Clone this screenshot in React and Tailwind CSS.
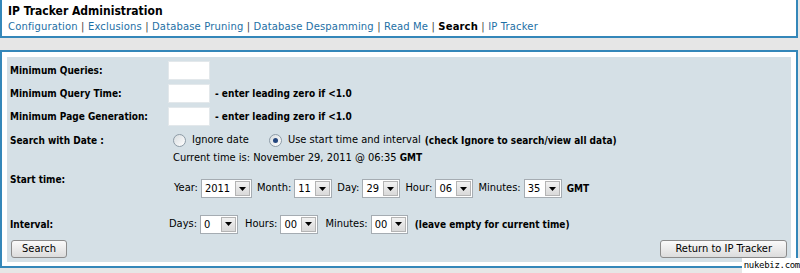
import { Fragment } from 'react'

const links = ['Configuration', 'Exclusions', 'Database Pruning', 'Database Despamming', 'Read Me', 'Search', 'IP Tracker']

function TextBox() {
  return <span className="inline-block h-[19px] w-[42px] border border-[#e3e8eb] bg-white" />
}

function Sel({ value, w }) {
  return (
    <span className={`inline-flex h-[19px] items-center border border-[#a5acb2] bg-white ${w}`}>
      <span className="flex-1 pl-[3px] text-[11px] leading-[17px]">{value}</span>
      <span className="mr-[1px] flex h-[15px] w-[15px] items-center justify-center border border-[#b4b4b4] bg-gradient-to-b from-[#f2f2f2] to-[#d9d9d9]">
        <svg width="7" height="4" viewBox="0 0 7 4"><path d="M0 0h7L3.5 4z" fill="#000" /></svg>
      </span>
    </span>
  )
}

function Radio({ checked }) {
  return (
    <span className="inline-flex h-[13px] w-[13px] items-center justify-center rounded-full border border-[#8d9ba6] bg-gradient-to-br from-[#d8dde0] to-white">
      {checked && <span className="h-[5px] w-[5px] rounded-full bg-[#24467e]" />}
    </span>
  )
}

function Btn({ children, px }) {
  return (
    <button className={`h-[18px] rounded-[3px] border border-[#8c8c8c] bg-gradient-to-b from-[#fafafa] to-[#dcdcdc] text-[11px] leading-[16px] text-black ${px}`}>
      {children}
    </button>
  )
}

export default function App() {
  return (
    <div className="relative h-[273px] w-[800px] overflow-hidden bg-[#e6e6e6] font-['DejaVu_Sans_Condensed','DejaVu_Sans',sans-serif] text-[11px] text-black font-stretch-condensed">
      {/* header panel */}
      <div className="mt-[-2px] h-[40px] w-[798px] border-2 border-[#3487b9] bg-white pl-[6px] pt-[4px]">
        <div className="text-[12px] font-bold leading-[14px]">IP Tracker Administration</div>
        <div className="mt-[3px] font-['DejaVu_Sans',sans-serif] text-[10px] leading-[12px] tracking-[0.15px] font-stretch-normal">
          {links.map((l, i) => (
            <Fragment key={l}>
              {i > 0 && <span className="text-[#444]"> | </span>}
              {l === 'Search'
                ? <span className="font-bold">{l}</span>
                : <span className="text-[#1d6fa5]">{l}</span>}
            </Fragment>
          ))}
        </div>
      </div>

      {/* search panel */}
      <div className="mt-[12px] w-[798px] border-2 border-[#3487b9] bg-white px-[5px] pt-[5px] pb-[4px]">
        <div className="h-[205px] bg-[#d5e0e6] pt-[2px] pl-[3px] pr-[4px]">
          <div className="flex h-[23px] items-center">
            <div className="w-[158px] text-[10px] font-bold">Minimum Queries:</div>
            <TextBox />
          </div>
          <div className="flex h-[23px] items-center">
            <div className="w-[158px] text-[10px] font-bold">Minimum Query Time:</div>
            <TextBox />
            <span className="ml-[5px] text-[10px] font-bold">- enter leading zero if &lt;1.0</span>
          </div>
          <div className="flex h-[23px] items-center">
            <div className="w-[158px] text-[10px] font-bold">Minimum Page Generation:</div>
            <TextBox />
            <span className="ml-[5px] text-[10px] font-bold">- enter leading zero if &lt;1.0</span>
          </div>
          <div className="flex h-[24px] items-center">
            <div className="w-[158px] text-[10px] font-bold">Search with Date :</div>
            <div className="flex items-center pl-[5px]">
              <Radio />
              <span className="ml-[6px]">Ignore date</span>
              <span className="ml-[20px]"><Radio checked /></span>
              <span className="ml-[6px]">Use start time and interval</span>
              <span className="ml-[4px] text-[10px] font-bold">(check Ignore to search/view all data)</span>
            </div>
          </div>
          <div className="flex h-[13px] items-center">
            <div className="w-[158px]" />
            <div className="pl-[5px]">Current time is: November 29, 2011 @ 06:35 <b className="text-[10px]">GMT</b></div>
          </div>
          <div className="flex h-[44px] items-start">
            <div className="mt-[9px] w-[158px] text-[10px] font-bold leading-[12px]">Start time:</div>
            <div className="mt-[14px] flex items-center gap-[3px] pl-[6px]">
              <span>Year:</span>
              <Sel value="2011" w="w-[51px]" />
              <span className="ml-[2px]">Month:</span>
              <Sel value="11" w="w-[38px]" />
              <span className="ml-[2px]">Day:</span>
              <Sel value="29" w="w-[38px]" />
              <span className="ml-[2px]">Hour:</span>
              <Sel value="06" w="w-[38px]" />
              <span className="ml-[2px]">Minutes:</span>
              <Sel value="35" w="w-[38px]" />
              <span className="ml-[2px] text-[10px] font-bold">GMT</span>
            </div>
          </div>
          <div className="flex h-[30px] items-center">
            <div className="w-[158px] text-[10px] font-bold">Interval:</div>
            <div className="flex items-center gap-[3px] pl-[1px]">
              <span>Days:</span>
              <Sel value="0" w="w-[38px]" />
              <span className="ml-[4px]">Hours:</span>
              <Sel value="00" w="w-[38px]" />
              <span className="ml-[4px]">Minutes:</span>
              <Sel value="00" w="w-[37px]" />
              <span className="ml-[4px] text-[10px] font-bold">(leave empty for current time)</span>
            </div>
          </div>
          <div className="mt-[1px] flex items-center justify-between pl-[1px]">
            <Btn px="px-[10px]">Search</Btn>
            <Btn px="px-[14px]">Return to IP Tracker</Btn>
          </div>
        </div>
      </div>

      <div className="absolute bottom-0 right-0 bg-white pl-[2px] font-['DejaVu_Sans_Mono',monospace] text-[9px] leading-[15px] tracking-[-0.3px] text-black">
        nukebiz.com
      </div>
    </div>
  )
}
